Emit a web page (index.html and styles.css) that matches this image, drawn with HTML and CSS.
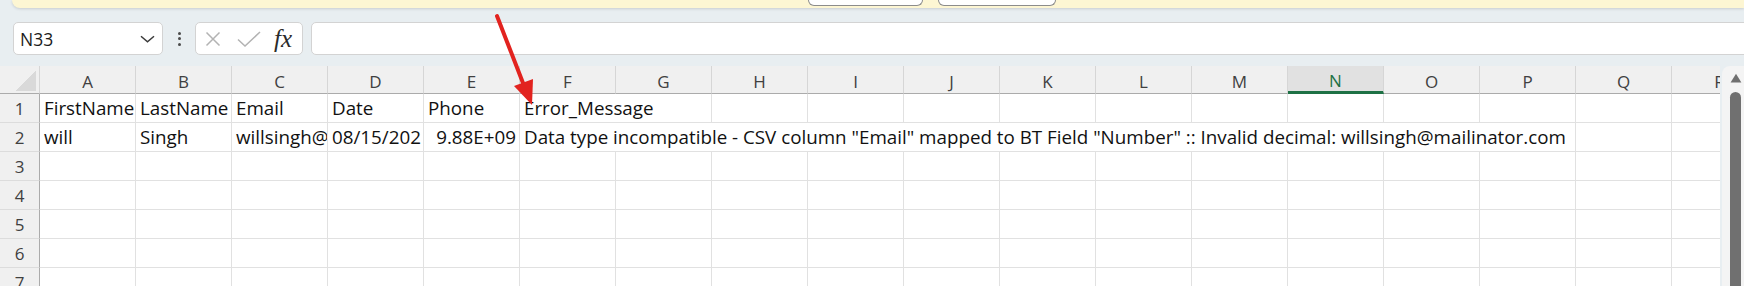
FILE: index.html
```html
<html>
  <head>
    <meta name="viewport" content="width=device-width,initial-scale=1">
    <link rel="stylesheet" href="styles.css">
  </head>

  <body>
    <!-- message bar, only its lower edge is in view -->
    <div class="banner">
      <span class="banner_btn"></span>
      <span class="banner_btn wide"></span>
    </div>

    <div class="formula_row">
      <div class="namebox">
        <span>N33</span>
        <svg class="chevron" width="15" height="8" viewBox="0 0 15 8"><path d="M1 1.2 L7.5 6.8 L14 1.2"/></svg>
      </div>
      <div class="more_dots"><i></i><i></i><i></i></div>
      <div class="fx_group">
        <svg class="cancel" width="18" height="18" viewBox="0 0 18 18"><path d="M2.5 2.5 L15.5 15.5 M15.5 2.5 L2.5 15.5"/></svg>
        <svg class="enter" width="24" height="16" viewBox="0 0 24 16"><path d="M1 8.5 L8 15 L23 1"/></svg>
        <span class="fx">fx</span>
      </div>
      <div class="formula_input"></div>
    </div>

    <div class="sheet">
      <div class="grid">
        <div class="corner"><span class="corner_tri"></span></div>
        <div class="ch">A</div><div class="ch">B</div><div class="ch">C</div><div class="ch">D</div><div class="ch">E</div><div class="ch">F</div>
        <div class="ch">G</div><div class="ch">H</div><div class="ch">I</div><div class="ch">J</div><div class="ch">K</div><div class="ch">L</div>
        <div class="ch">M</div><div class="ch sel">N</div><div class="ch">O</div><div class="ch">P</div><div class="ch">Q</div><div class="ch">R</div>

        <div class="rh">1</div>
        <div class="c">FirstName</div>
        <div class="c">LastName</div>
        <div class="c">Email</div>
        <div class="c">Date</div>
        <div class="c">Phone</div>
        <div class="c span2">Error_Message</div>
        <div class="c"></div><div class="c"></div><div class="c"></div><div class="c"></div><div class="c"></div><div class="c"></div>
        <div class="c"></div><div class="c"></div><div class="c"></div><div class="c"></div><div class="c"></div>

        <div class="rh">2</div>
        <div class="c">will</div>
        <div class="c">Singh</div>
        <div class="c">willsingh@</div>
        <div class="c">08/15/202</div>
        <div class="c num">9.88E+09</div>
        <div class="c span11">Data type incompatible - CSV column "Email" mapped to BT Field "Number" :: Invalid decimal: willsingh@mailinator.com</div>
        <div class="c"></div><div class="c"></div>

        <div class="rh">3</div>
        <div class="c"></div><div class="c"></div><div class="c"></div><div class="c"></div><div class="c"></div><div class="c"></div>
        <div class="c"></div><div class="c"></div><div class="c"></div><div class="c"></div><div class="c"></div><div class="c"></div>
        <div class="c"></div><div class="c"></div><div class="c"></div><div class="c"></div><div class="c"></div><div class="c"></div>

        <div class="rh">4</div>
        <div class="c"></div><div class="c"></div><div class="c"></div><div class="c"></div><div class="c"></div><div class="c"></div>
        <div class="c"></div><div class="c"></div><div class="c"></div><div class="c"></div><div class="c"></div><div class="c"></div>
        <div class="c"></div><div class="c"></div><div class="c"></div><div class="c"></div><div class="c"></div><div class="c"></div>

        <div class="rh">5</div>
        <div class="c"></div><div class="c"></div><div class="c"></div><div class="c"></div><div class="c"></div><div class="c"></div>
        <div class="c"></div><div class="c"></div><div class="c"></div><div class="c"></div><div class="c"></div><div class="c"></div>
        <div class="c"></div><div class="c"></div><div class="c"></div><div class="c"></div><div class="c"></div><div class="c"></div>

        <div class="rh">6</div>
        <div class="c"></div><div class="c"></div><div class="c"></div><div class="c"></div><div class="c"></div><div class="c"></div>
        <div class="c"></div><div class="c"></div><div class="c"></div><div class="c"></div><div class="c"></div><div class="c"></div>
        <div class="c"></div><div class="c"></div><div class="c"></div><div class="c"></div><div class="c"></div><div class="c"></div>

        <div class="rh">7</div>
        <div class="c"></div><div class="c"></div><div class="c"></div><div class="c"></div><div class="c"></div><div class="c"></div>
        <div class="c"></div><div class="c"></div><div class="c"></div><div class="c"></div><div class="c"></div><div class="c"></div>
        <div class="c"></div><div class="c"></div><div class="c"></div><div class="c"></div><div class="c"></div><div class="c"></div>
      </div>

      <div class="vscroll">
        <svg class="vs_up" width="12" height="10" viewBox="0 0 12 10"><path d="M6 0.8 L11.4 9.4 L0.6 9.4 Z"/></svg>
        <div class="vs_thumb"></div>
      </div>
    </div>

    <!-- red annotation arrow drawn over the sheet -->
    <svg class="pointer" width="1744" height="286" viewBox="0 0 1744 286">
      <line x1="497" y1="16" x2="523" y2="83" stroke="#e2231f" stroke-width="4" stroke-linecap="round"/>
      <polygon points="533,79 532,105 514,86" fill="#e2231f"/>
    </svg>
  </body>
</html>
```

FILE: styles.css
```css
body {
    margin: 0;
    width: 1744px;
    height: 286px;
    overflow: hidden;
    position: relative;
    background: #e8eef1;
    font-family: 'Open Sans', sans-serif;
}

/* yellow message bar */
.banner {
    height: 8px;
    margin-left: 12px;
    padding-left: 796px;
    box-sizing: border-box;
    display: flex;
    gap: 15px;
    background: #fdf6d3;
    border-bottom-left-radius: 8px;
    box-shadow: 0 1px 3px rgba(0, 0, 0, .14);
}
.banner_btn {
    width: 115px;
    height: 6px;
    box-sizing: border-box;
    background: #fff;
    border: 1px solid #8c8c8c;
    border-top: 0;
    border-radius: 0 0 6px 6px;
}
.banner_btn.wide {
    width: 118px;
}

/* name box + formula bar */
.formula_row {
    display: flex;
    align-items: center;
    height: 33px;
    margin: 14px 0 11px 13px;
}
.namebox {
    width: 150px;
    height: 33px;
    box-sizing: border-box;
    display: flex;
    align-items: center;
    justify-content: space-between;
    padding: 0 7px 0 6px;
    background: #fff;
    border: 1px solid #d3d3d3;
    border-radius: 5px;
    font-size: 17.5px;
    color: #1b1b1b;
}
.chevron path {
    fill: none;
    stroke: #3a3a3a;
    stroke-width: 1.5;
}
.more_dots {
    width: 32px;
    display: flex;
    flex-direction: column;
    align-items: center;
    gap: 2.5px;
}
.more_dots i {
    width: 3px;
    height: 3px;
    border-radius: 50%;
    background: #4a4a4a;
}
.fx_group {
    width: 108px;
    height: 33px;
    box-sizing: border-box;
    display: flex;
    align-items: center;
    padding-left: 8px;
    background: #fff;
    border: 1px solid #d3d3d3;
    border-radius: 5px;
}
.cancel path,
.enter path {
    fill: none;
    stroke: #b3b3b3;
    stroke-width: 1.5;
}
.enter {
    margin-left: 15px;
}
.fx {
    margin-left: 13px;
    width: 22px;
    font-family: 'Liberation Serif', serif;
    font-style: italic;
    font-size: 25px;
    line-height: 1;
    color: #2b2b2b;
}
.formula_input {
    flex: 1;
    height: 33px;
    box-sizing: border-box;
    margin-left: 8px;
    margin-right: -12px;
    background: #fff;
    border: 1px solid #d3d3d3;
    border-radius: 5px;
}

/* worksheet */
.sheet {
    display: flex;
    height: 220px;
}
.grid {
    width: 1720px;
    flex: none;
    overflow: hidden;
    display: grid;
    grid-template-columns: 40px repeat(18, 96px);
    grid-template-rows: 28px repeat(7, 29px);
    background: #fff;
}
.grid > div {
    box-sizing: border-box;
    display: flex;
    align-items: center;
    white-space: nowrap;
    overflow: hidden;
}
.c {
    padding: 0 4px;
    border-right: 1px solid #e1e1e1;
    border-bottom: 1px solid #e1e1e1;
    font-size: 18.8px;
    color: #111;
}
.c.num {
    justify-content: flex-end;
    padding-right: 3px;
}
.c.span2 {
    grid-column: span 2;
}
.c.span11 {
    grid-column: span 11;
}
.ch {
    justify-content: center;
    padding-top: 3px;
    background: #f0f0f0;
    border-right: 1px solid #d6d6d6;
    border-bottom: 1px solid #ababab;
    font-size: 17px;
    color: #404040;
}
.ch.sel {
    background: #e1e1e1;
    border-bottom: 3px solid #1e7145;
    color: #1e7145;
}
.rh {
    justify-content: center;
    background: #f0f0f0;
    border-right: 1px solid #ababab;
    border-bottom: 1px solid #dcdcdc;
    font-size: 17px;
    color: #404040;
}
.grid > .corner {
    align-items: flex-start;
    padding: 4px 0 0 16px;
    background: #f0f0f0;
    border-right: 1px solid #d6d6d6;
    border-bottom: 1px solid #ababab;
}
.corner_tri {
    width: 20px;
    height: 21px;
    background: linear-gradient(to bottom right, transparent 50%, #d9d9d9 50%);
}

/* vertical scroll bar */
.vscroll {
    flex: 1;
    margin-left: 2px;
    padding: 7px 0 0 8px;
    background: #f4f4f4;
    border-top-left-radius: 8px;
}
.vs_up {
    display: block;
    fill: #707070;
}
.vs_thumb {
    margin-top: 9px;
    width: 11px;
    height: 300px;
    border-radius: 6px;
    background: #707070;
}

.pointer {
    position: absolute;
    top: 0;
    left: 0;
    pointer-events: none;
}
```
